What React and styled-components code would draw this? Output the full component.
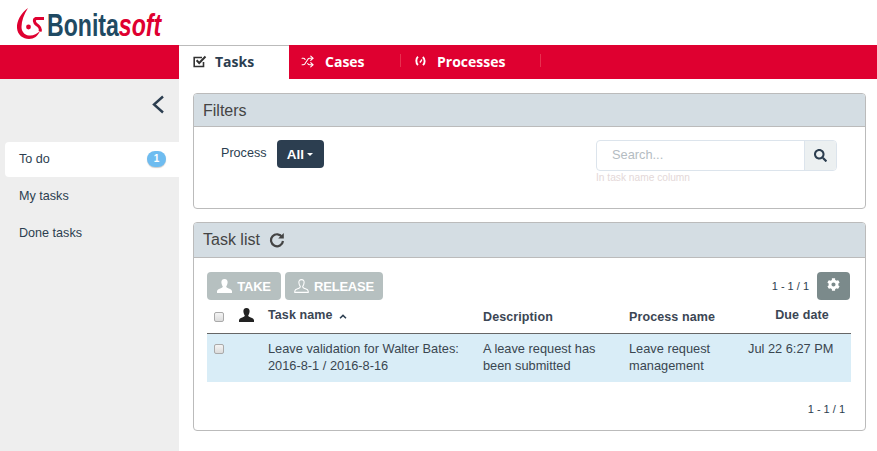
import React from "react";
import styled, { createGlobalStyle } from "styled-components";
import { FaCog, FaSearch } from "react-icons/fa";
import { Shuffle } from "lucide-react";

const GlobalStyle = createGlobalStyle`
  html, body {
    margin: 0;
    padding: 0;
    background: #fff;
    font-family: "Liberation Sans", Arial, sans-serif;
    color: #2c3e50;
    overflow: hidden;
  }
`;

const Page = styled.div`
  width: 877px;
  height: 451px;
  display: flex;
  flex-direction: column;
  overflow: hidden;
`;

const Header = styled.header`
  height: 45px;
  display: flex;
  align-items: flex-start;
  padding: 7px 0 0 16px;
  box-sizing: border-box;
  gap: 1px;
`;

const LogoText = styled.div`
  font-family: "Liberation Sans", sans-serif;
  font-weight: 700;
  font-size: 31px;
  line-height: 34px;
  margin-top: 2px;
  color: #1f4a63;
  white-space: nowrap;
  transform: scaleX(0.745);
  transform-origin: left center;

  span {
    color: #df0030;
    font-style: italic;
  }
`;

const Nav = styled.nav`
  height: 34px;
  background: #df0030;
  display: flex;
  padding-left: 179px;
`;

const NavTab = styled.a`
  display: flex;
  align-items: center;
  box-sizing: border-box;
  width: ${(p) => p.$width}px;
  padding: 0 0 2px ${(p) => p.$pad}px;
  gap: ${(p) => p.$gap}px;
  font-family: "Open Sans", sans-serif;
  font-weight: 700;
  font-size: 14px;
  color: ${(p) => (p.$active ? "#2c3e50" : "#fff")};
  background: ${(p) => (p.$active ? "#fff" : "transparent")};
  border-top: ${(p) => (p.$active ? "1px solid #bbb" : "none")};
  position: relative;

  &::after {
    content: "";
    display: ${(p) => (p.$active ? "none" : "block")};
    position: absolute;
    right: 0;
    top: 9px;
    height: 13px;
    width: 1px;
    background: #e8304f;
  }
`;

const Main = styled.div`
  flex: 1;
  display: flex;
  min-height: 0;
`;

const Sidebar = styled.aside`
  width: 179px;
  background: #eee;
  padding: 16px 0 0 5px;
  box-sizing: border-box;
  display: flex;
  flex-direction: column;
`;

const Collapse = styled.div`
  display: flex;
  justify-content: flex-end;
  padding-right: 14px;
  height: 47px;
`;

const SideItem = styled.div`
  height: 35px;
  margin-bottom: 2px;
  display: flex;
  align-items: center;
  justify-content: space-between;
  padding: 0 13px 2px 14px;
  box-sizing: border-box;
  font-size: 12.6px;
  color: #2c3e50;
  border-radius: 4px 0 0 4px;
  background: ${(p) => (p.$active ? "#fff" : "transparent")};
`;

const Badge = styled.span`
  width: 19px;
  height: 16px;
  border-radius: 8px;
  background: #6ebcf0;
  color: #fff;
  font-size: 10px;
  font-weight: 700;
  display: flex;
  align-items: center;
  justify-content: center;
  box-shadow: 0 1px 1px rgba(0, 0, 0, 0.2);
`;

const Content = styled.main`
  flex: 1;
  padding: 14px 11px 0 14px;
  display: flex;
  flex-direction: column;
  gap: 13px;
`;

const Panel = styled.section`
  border: 1px solid #bbb;
  border-radius: 4px;
  height: ${(p) => p.$height}px;
  box-sizing: border-box;
  display: flex;
  flex-direction: column;
  overflow: hidden;
`;

const PanelHeading = styled.div`
  height: ${(p) => p.$height}px;
  flex: none;
  box-sizing: border-box;
  background: #d4dde3;
  border-bottom: 1px solid #bbb;
  padding: ${(p) => p.$top || 0}px 0 0 9px;
  display: flex;
  align-items: center;
  gap: 9px;
  font-size: 16px;
  color: #444;
`;

const FilterBody = styled.div`
  display: flex;
  justify-content: space-between;
  padding: 13px 28px 0 27px;
`;

const FilterGroup = styled.div`
  display: flex;
  align-items: flex-start;
  gap: 10px;
`;

const FilterLabel = styled.span`
  font-size: 12.6px;
  line-height: 26px;
  color: #2c3e50;
`;

const DropButton = styled.button`
  width: 47px;
  height: 28px;
  border: none;
  border-radius: 4px;
  background: #2c3e50;
  color: #fff;
  font: 700 13.5px "Liberation Sans", sans-serif;
  padding: 0;
  display: flex;
  align-items: center;
  justify-content: center;
  gap: 3px;
`;

const Caret = styled.i`
  width: 0;
  height: 0;
  border-left: 3px solid transparent;
  border-right: 3px solid transparent;
  border-top: 3px solid #fff;
`;

const SearchBox = styled.div`
  display: flex;
  flex-direction: column;
  width: 241px;
`;

const SearchRow = styled.div`
  display: flex;
  height: 31px;
  box-sizing: border-box;
  border: 1px solid #dce4ec;
  border-radius: 4px;
  overflow: hidden;
`;

const SearchInput = styled.div`
  flex: 1;
  padding-left: 15px;
  font-size: 12.8px;
  line-height: 28px;
  color: #b4bcc2;
`;

const SearchAddon = styled.div`
  width: 31px;
  flex: none;
  background: #ecf0f1;
  border-left: 1px solid #dce4ec;
  display: flex;
  align-items: center;
  justify-content: center;
  color: #2c3e50;
`;

const HelpText = styled.div`
  font-size: 10.2px;
  line-height: 12px;
  margin-top: 1px;
  color: #e4d8d8;
`;

const ListBody = styled.div`
  padding: 14px 14px 0 13px;
`;

const Toolbar = styled.div`
  display: flex;
  align-items: flex-start;
  height: 28px;
  gap: 4px;
  padding-right: 1px;
`;

const ActionButton = styled.button`
  height: 28px;
  width: ${(p) => p.$width}px;
  border: none;
  border-radius: 4px;
  background: #b6c0c0;
  color: #fff;
  font: 700 13px "Liberation Sans", sans-serif;
  letter-spacing: -0.2px;
  padding: 0;
  display: flex;
  align-items: center;
  justify-content: center;
  gap: 5px;
`;

const Pager = styled.span`
  font-size: 11px;
  color: #2c3e50;
  margin-left: ${(p) => p.$left || 0};
  margin-top: 8px;
`;

const GearButton = styled.button`
  width: 33px;
  height: 28px;
  margin-left: 4px;
  border: none;
  border-radius: 4px;
  background: #7b8a8b;
  color: #fff;
  padding: 0 0 4px;
  display: flex;
  align-items: center;
  justify-content: center;
`;

const TableGrid = styled.div`
  display: grid;
  grid-template-columns: 25px 36px 215px 146px 119px 103px;
  font-size: 12.8px;
  color: #2c3e50;
`;

const HeadCell = styled.div`
  height: 34px;
  box-sizing: border-box;
  border-bottom: 1px solid #666;
  padding-top: ${(p) => p.$top}px;
  padding-left: ${(p) => p.$left || 0}px;
  font-size: 12.5px;
  font-weight: 700;
  line-height: 15px;
  letter-spacing: 0.1px;
  white-space: nowrap;
  color: #3b4654;
  text-align: ${(p) => (p.$center ? "center" : "left")};
`;

const RowCell = styled.div`
  height: 48px;
  box-sizing: border-box;
  background: #d9edf7;
  padding-top: 6px;
  padding-left: ${(p) => p.$left || 0}px;
  line-height: 17px;
  white-space: pre-line;
  color: #3a4650;
`;

const Check = styled.span`
  display: block;
  width: 10px;
  height: 10px;
  box-sizing: border-box;
  margin: 4px 0 0 7px;
  border: 1px solid #aaa;
  border-radius: 2px;
  background: linear-gradient(#f4f4f4, #dcdcdc);
`;

const SortArrow = styled.svg`
  margin-left: 6px;
  vertical-align: 0;
`;

const BottomPager = styled.div`
  text-align: right;
  padding: 21px 6px 0 0;
  font-size: 11px;
  color: #2c3e50;
`;

const LogoMark = () => (
  <svg width="30" height="33" viewBox="16 6 30 33" fill="none" style={{ flex: "none" }}>
    <path
      d="M28 7C21 12 16.5 20 17 27C17.5 34 23 38 29 38C34 38 38 35 40 30C37 33 33 35 29 34.5C24 34 21.5 30 21.5 26C21.5 20 24 13 28 7Z"
      fill="#df0030"
    />
    <path
      d="M44 17.5H36C33.5 18.5 34 21.5 36.5 23.5C39.5 25.5 41 28 40 30.5"
      stroke="#df0030"
      strokeWidth="3"
    />
    <circle cx="28.5" cy="26" r="2.4" fill="#df0030" />
  </svg>
);

const TaskIcon = () => (
  <svg width="14" height="13" viewBox="0 0 14 13" fill="none">
    <path d="M10.5 7V11.5H1.2V2.5H9" stroke="#333" strokeWidth="1.6" />
    <path d="M3.6 5.2L6.2 8L12.5 1.5" stroke="#333" strokeWidth="2" />
  </svg>
);

const ProcessIcon = () => (
  <svg width="11" height="12" viewBox="0 0 11 12" fill="none" stroke="#fff" strokeWidth="1.9">
    <path d="M3 1.8C.8 3.5.7 8 3 10" />
    <path d="M7.8 2C10.2 4 10.2 8 8 10.2" />
    <path d="M4.8 7.5L6 6.2L6.8 4.5" strokeWidth="1.5" />
  </svg>
);

const RefreshIcon = () => (
  <svg width="16" height="16" viewBox="0 0 16 16" fill="none">
    <path d="M13.2 5.2A6 6 0 1 0 14 9" stroke="#444" strokeWidth="2.2" />
    <path d="M14.8 1V6.6H9.2Z" fill="#444" />
  </svg>
);

const UserSolid = ({ color, size = 15 }) => (
  <svg width={size} height={size - 1} viewBox="0 0 15 14" fill={color}>
    <path d="M7.5 0C5.2 0 4.2 1.6 4.4 3.6C4.6 5.8 5.4 7 5.8 7.6C5.9 8.5 5 9 3.2 9.6C1.4 10.2.3 10.8 0 12.2V14H15V12.2C14.7 10.8 13.6 10.2 11.8 9.6C10 9 9.1 8.5 9.2 7.6C9.6 7 10.4 5.8 10.6 3.6C10.8 1.6 9.8 0 7.5 0Z" />
  </svg>
);

const UserOutline = () => (
  <svg width="15" height="14" viewBox="0 0 15 14" fill="none" stroke="#fff" strokeWidth="1.1">
    <path d="M7.5.6C5.5.6 4.7 2 4.9 3.7C5.1 5.6 5.8 6.8 6.3 7.4C6.4 8.6 5.4 9.2 3.6 9.8C2 10.3 1 10.9.8 12V13.4H14.2V12C14 10.9 13 10.3 11.4 9.8C9.6 9.2 8.6 8.6 8.7 7.4C9.2 6.8 9.9 5.6 10.1 3.7C10.3 2 9.5.6 7.5.6Z" />
  </svg>
);

const App = () => {
  return (
    <Page>
      <GlobalStyle />
      <Header>
        <LogoMark />
        <LogoText>
          Bonita<span>soft</span>
        </LogoText>
      </Header>
      <Nav>
        <NavTab $active $width={110} $pad={14} $gap={8}>
          <TaskIcon />
          Tasks
        </NavTab>
        <NavTab $width={112} $pad={12} $gap={11}>
          <Shuffle size={13} strokeWidth={2} />
          Cases
        </NavTab>
        <NavTab $width={140} $pad={14} $gap={11}>
          <ProcessIcon />
          Processes
        </NavTab>
      </Nav>
      <Main>
        <Sidebar>
          <Collapse>
            <svg width="14" height="19" viewBox="0 0 14 19" fill="none">
              <path d="M12 1.5L3 9.5L12 17.5" stroke="#2c3e50" strokeWidth="2.4" />
            </svg>
          </Collapse>
          <SideItem $active>
            To do
            <Badge>1</Badge>
          </SideItem>
          <SideItem>My tasks</SideItem>
          <SideItem>Done tasks</SideItem>
        </Sidebar>
        <Content>
          <Panel $height={116}>
            <PanelHeading $height={33} $top={2}>
              Filters
            </PanelHeading>
            <FilterBody>
              <FilterGroup>
                <FilterLabel>Process</FilterLabel>
                <DropButton>
                  All
                  <Caret />
                </DropButton>
              </FilterGroup>
              <SearchBox>
                <SearchRow>
                  <SearchInput>Search...</SearchInput>
                  <SearchAddon>
                    <FaSearch size={13} />
                  </SearchAddon>
                </SearchRow>
                <HelpText>In task name column</HelpText>
              </SearchBox>
            </FilterBody>
          </Panel>
          <Panel $height={209}>
            <PanelHeading $height={35}>
              Task list
              <RefreshIcon />
            </PanelHeading>
            <ListBody>
              <Toolbar>
                <ActionButton $width={74}>
                  <UserSolid color="#fff" />
                  TAKE
                </ActionButton>
                <ActionButton $width={98}>
                  <UserOutline />
                  RELEASE
                </ActionButton>
                <Pager $left="auto">1 - 1 / 1</Pager>
                <GearButton>
                  <FaCog size={13} />
                </GearButton>
              </Toolbar>
              <TableGrid>
                <HeadCell $top={8}>
                  <Check />
                </HeadCell>
                <HeadCell $top={8} $left={7}>
                  <UserSolid color="#222" />
                </HeadCell>
                <HeadCell $top={8}>
                  Task name
                  <SortArrow width="8" height="5" viewBox="0 0 8 5" fill="none">
                    <path d="M1 4.2L4 1.4L7 4.2" stroke="#2c3e50" strokeWidth="1.5" />
                  </SortArrow>
                </HeadCell>
                <HeadCell $top={10}>Description</HeadCell>
                <HeadCell $top={10}>Process name</HeadCell>
                <HeadCell $top={8} $left={5} $center>
                  Due date
                </HeadCell>
                <RowCell>
                  <Check />
                </RowCell>
                <RowCell />
                <RowCell>{"Leave validation for Walter Bates:\n2016-8-1 / 2016-8-16"}</RowCell>
                <RowCell>{"A leave request has\nbeen submitted"}</RowCell>
                <RowCell>{"Leave request\nmanagement"}</RowCell>
                <RowCell>Jul 22 6:27 PM</RowCell>
              </TableGrid>
              <BottomPager>1 - 1 / 1</BottomPager>
            </ListBody>
          </Panel>
        </Content>
      </Main>
    </Page>
  );
};

export default App;
